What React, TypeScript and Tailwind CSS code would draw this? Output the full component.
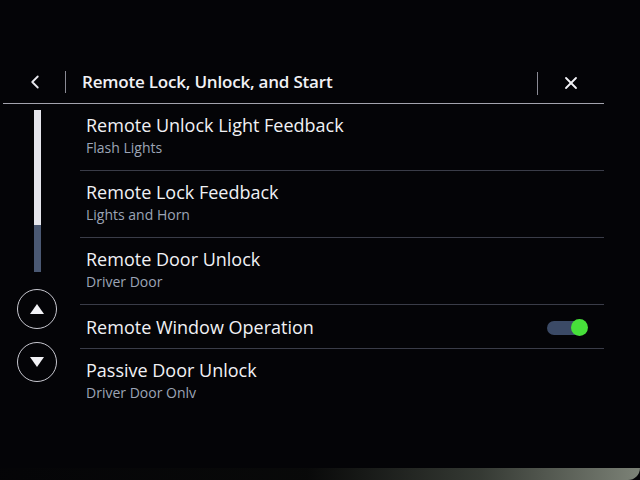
import { ChevronLeft, X } from "lucide-react"

type Row = {
  title: string
  subtitle?: string
  toggle?: boolean
  height: string
}

const rows: Row[] = [
  { title: "Remote Unlock Light Feedback", subtitle: "Flash Lights", height: "h-[67px]" },
  { title: "Remote Lock Feedback", subtitle: "Lights and Horn", height: "h-[67px]" },
  { title: "Remote Door Unlock", subtitle: "Driver Door", height: "h-[67px]" },
  { title: "Remote Window Operation", toggle: true, height: "h-[44px]" },
  { title: "Passive Door Unlock", subtitle: "Driver Door Only", height: "h-[60px]" },
]

function ArrowButton({ down }: { down?: boolean }) {
  return (
    <button
      type="button"
      className="flex h-[40px] w-[40px] items-center justify-center rounded-full border-[1.5px] border-[#c8c8d0]"
    >
      <svg width="16" height="12" viewBox="0 0 16 12">
        {down ? (
          <polygon points="1,1 15,1 8,11" fill="#f2f2f6" />
        ) : (
          <polygon points="8,1 15,11 1,11" fill="#f2f2f6" />
        )}
      </svg>
    </button>
  )
}

function Toggle() {
  return (
    <div className="relative mr-[19px] mt-[3px] h-[14px] w-[38px] rounded-full bg-[#3b4a66]">
      <div className="absolute right-[-3px] top-[-2px] h-[17px] w-[17px] rounded-full bg-[#47e03a]" />
    </div>
  )
}

export default function App() {
  return (
    <div
      className="flex h-[480px] w-[640px] flex-col overflow-hidden bg-[#040407] text-[#f1f1f5]"
      style={{ fontFamily: '"Open Sans", "Noto Sans", sans-serif' }}
    >
      <div className="h-[62px]" />

      {/* Header */}
      <div className="ml-[3px] mr-[36px] flex h-[42px] items-center border-b-[1.5px] border-[#a3a3ad] pb-[2px]">
        <div className="flex w-[62px] justify-center pl-[2px]">
          <ChevronLeft size={22} strokeWidth={2} className="text-[#e8e8ee]" />
        </div>
        <div className="h-[22px] w-px bg-[#8a8a94]" />
        <div className="ml-[16px] flex-1 text-[17px] font-semibold tracking-[-0.2px]">
          Remote Lock, Unlock, and Start
        </div>
        <div className="mt-[4px] h-[23px] w-px bg-[#8a8a94]" />
        <div className="flex w-[66px] justify-center pt-[3px]">
          <X size={20} strokeWidth={2.2} className="text-[#f2f2f6]" />
        </div>
      </div>

      {/* Body */}
      <div className="flex h-[294px]">
        <div className="flex w-[80px] flex-col items-start pl-[17px] pt-[6px]">
          <div className="ml-[17px] flex h-[162px] w-[7px] flex-col">
            <div className="h-[115px] bg-[#e6e6ec]" />
            <div className="flex-1 bg-[#4a5872]" />
          </div>
          <div className="mt-[17px] flex flex-col gap-[13px]">
            <ArrowButton />
            <ArrowButton down />
          </div>
        </div>

        <div className="flex-1 overflow-hidden pr-[36px]">
          {rows.map((row, i) => (
            <div
              key={row.title}
              className={`${row.height} flex ${row.toggle ? "items-center" : "flex-col pt-[9px]"} ${
                i < rows.length - 1 ? "border-b border-[#3a3c48]" : ""
              } pl-[6px]`}
            >
              {row.toggle ? (
                <>
                  <div className="flex-1 text-[18px] leading-[24px]">{row.title}</div>
                  <Toggle />
                </>
              ) : (
                <>
                  <div className="text-[18px] leading-[25px]">{row.title}</div>
                  <div className="text-[14px] leading-[19px] text-[#9ca4b6]">{row.subtitle}</div>
                </>
              )}
            </div>
          ))}
        </div>
      </div>

      <div className="flex-1" />

      {/* Bezel edge */}
      <div className="h-[12px] rounded-br-[30px] bg-[linear-gradient(90deg,#050507_0%,#0a0b0a_48%,#454b42_75%,#a4ac9c_100%)] opacity-75" />
    </div>
  )
}
